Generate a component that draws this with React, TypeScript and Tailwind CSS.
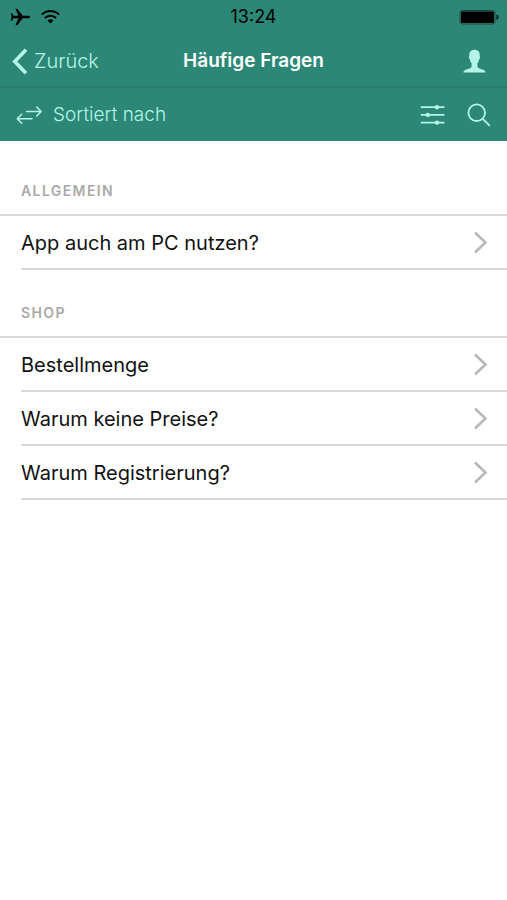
import React from "react";

const sections = [
  { title: "ALLGEMEIN", items: ["App auch am PC nutzen?"] },
  {
    title: "SHOP",
    items: ["Bestellmenge", "Warum keine Preise?", "Warum Registrierung?"],
  },
];

function StatusBar() {
  return (
    <div className="grid h-[34px] grid-cols-[1fr_auto_1fr] items-center px-2 text-black">
      <div className="flex items-center gap-[10px] pl-[2px]">
        <svg width="21" height="18" viewBox="0 0 21 18" fill="currentColor" aria-label="Flugmodus">
          <path d="M20 9c0-.9-1-1.300-2.400-1.300h-4.800L7.300.8H5.500l2.900 6.900H3.600L1.900 5.200H.8L1.600 9l-.8 3.800h1.100l1.700-2.500h4.800l-2.900 6.900h1.800l5.500-6.900h4.800C19 10.300 20 9.900 20 9z" />
        </svg>
        <svg width="19" height="14" viewBox="0 0 19 14" fill="none" stroke="currentColor" strokeWidth="2" aria-label="WLAN">
          <path d="M.8 4.600a12.400 12.400 0 0 1 17.400 0" />
          <path d="M3.900 8a8 8 0 0 1 11.200 0" />
          <path d="M9.500 13.600 6.600 10.700a4.200 4.200 0 0 1 5.800 0z" fill="currentColor" stroke="none" />
        </svg>
      </div>
      <time className="text-center text-[18px] leading-5">13:24</time>
      <svg className="justify-self-end" width="40" height="16" viewBox="0 0 40 16" aria-label="Akku">
        <rect x="1" y="1.500" width="35" height="13.500" rx="2.500" fill="none" stroke="#174a40" strokeWidth="1" />
        <rect x="2" y="2.500" width="33" height="11.500" rx="1" fill="#000" />
        <path d="M37.300 5.500c2 .6 2.300 1.500 2.300 2.700s-.3 2.100-2.300 2.700z" fill="#0c2d27" />
      </svg>
    </div>
  );
}

function NavBar() {
  return (
    <nav className="grid h-[54px] grid-cols-[1fr_auto_1fr] items-center border-b-2 border-[#297b6d] px-3 pt-[2px]">
      <button type="button" className="flex items-center gap-[6px] justify-self-start text-[20px] leading-6 font-light">
        <svg width="16" height="27" viewBox="0 0 16 27" fill="none" stroke="currentColor" strokeWidth="3.600">
          <path d="M14 1.800 2.800 13.500 14 25.200" />
        </svg>
        Zurück
      </button>
      <h1 className="text-[19px] leading-6 font-semibold text-white">Häufige Fragen</h1>
      <button type="button" aria-label="Profil" className="justify-self-end pr-[9px]">
        <svg width="23" height="24" viewBox="0 0 23 24" fill="currentColor">
          <path d="M11.500.8c-3.500 0-5.400 2.300-5.200 5.400.1 1-.4 1.400-.3 2.200.1 1 .7 1.300.9 2.200.3 1.600 1 2.900 1.700 3.700v3.200c0 1.400-2 2-4.300 2.700C2 20.900.4 21.500.4 23.500h22.200c0-2-1.600-2.600-3.900-3.300-2.300-.7-4.300-1.300-4.300-2.700v-3.200c.7-.8 1.400-2.100 1.700-3.700.2-.9.800-1.200.9-2.200.1-.8-.4-1.200-.3-2.200C16.900 3.100 15 .8 11.500.8z" />
        </svg>
      </button>
    </nav>
  );
}

function Toolbar() {
  return (
    <div className="flex h-[53px] items-center justify-between px-4">
      <button type="button" className="flex items-center gap-[10px] text-[19px] leading-6 font-light">
        <svg width="27" height="18" viewBox="0 0 27 18" fill="none" stroke="currentColor" strokeWidth="1.500" strokeLinecap="round" strokeLinejoin="round">
          <path d="M10.500 5.500h14.700M20.700 1l4.500 4.500-4.500 4.500" />
          <path d="M16 12.700H1.200M5.700 8.200l-4.500 4.500 4.500 4.500" />
        </svg>
        Sortiert nach
      </button>
      <div className="flex items-center gap-[22px]">
        <button type="button" aria-label="Filter">
          <svg width="25" height="20" viewBox="0 0 25 20" fill="currentColor" stroke="currentColor" strokeWidth="1.700">
            <path d="M.8 2.200h23.600M.8 9.900h23.600M.8 17.600h23.600" />
            <g stroke="none">
              <circle cx="17" cy="2.200" r="2.200" />
              <circle cx="7.800" cy="9.900" r="2.200" />
              <circle cx="17" cy="17.600" r="2.200" />
            </g>
          </svg>
        </button>
        <button type="button" aria-label="Suchen">
          <svg width="24" height="24" viewBox="0 0 24 24" fill="none" stroke="currentColor" strokeWidth="1.800">
            <circle cx="9.700" cy="9.700" r="8.300" />
            <path d="m15.800 15.800 7 7" />
          </svg>
        </button>
      </div>
    </div>
  );
}

function Row({ label }: { label: string }) {
  return (
    <li className="pl-[21px]">
      <a href="#" className="flex h-[54px] items-center justify-between border-b-2 border-[#dadada] pt-[2px] pr-[19px] text-[20px] leading-6 text-[#111]">
        {label}
        <svg width="15" height="24" viewBox="0 0 15 24" fill="none" stroke="#b8b8b8" strokeWidth="2.600" aria-hidden="true">
          <path d="M2 1.500l10.500 10L2 21.500" />
        </svg>
      </a>
    </li>
  );
}

export default function App() {
  return (
    <div className="min-h-screen bg-white font-['Inter','Liberation_Sans',sans-serif]">
      <header className="bg-[#2c8776] text-[#b4f5e8]">
        <StatusBar />
        <NavBar />
        <Toolbar />
      </header>
      <main className="pt-[7px]">
        {sections.map((section) => (
          <section key={section.title}>
            <h2 className="flex h-[68px] items-end border-b-2 border-[#dadada] pb-[13px] pl-[21px] text-[14px] leading-5 font-semibold tracking-widest text-[#a9a9a9]">
              {section.title}
            </h2>
            <ul>
              {section.items.map((item) => (
                <Row key={item} label={item} />
              ))}
            </ul>
          </section>
        ))}
      </main>
    </div>
  );
}
